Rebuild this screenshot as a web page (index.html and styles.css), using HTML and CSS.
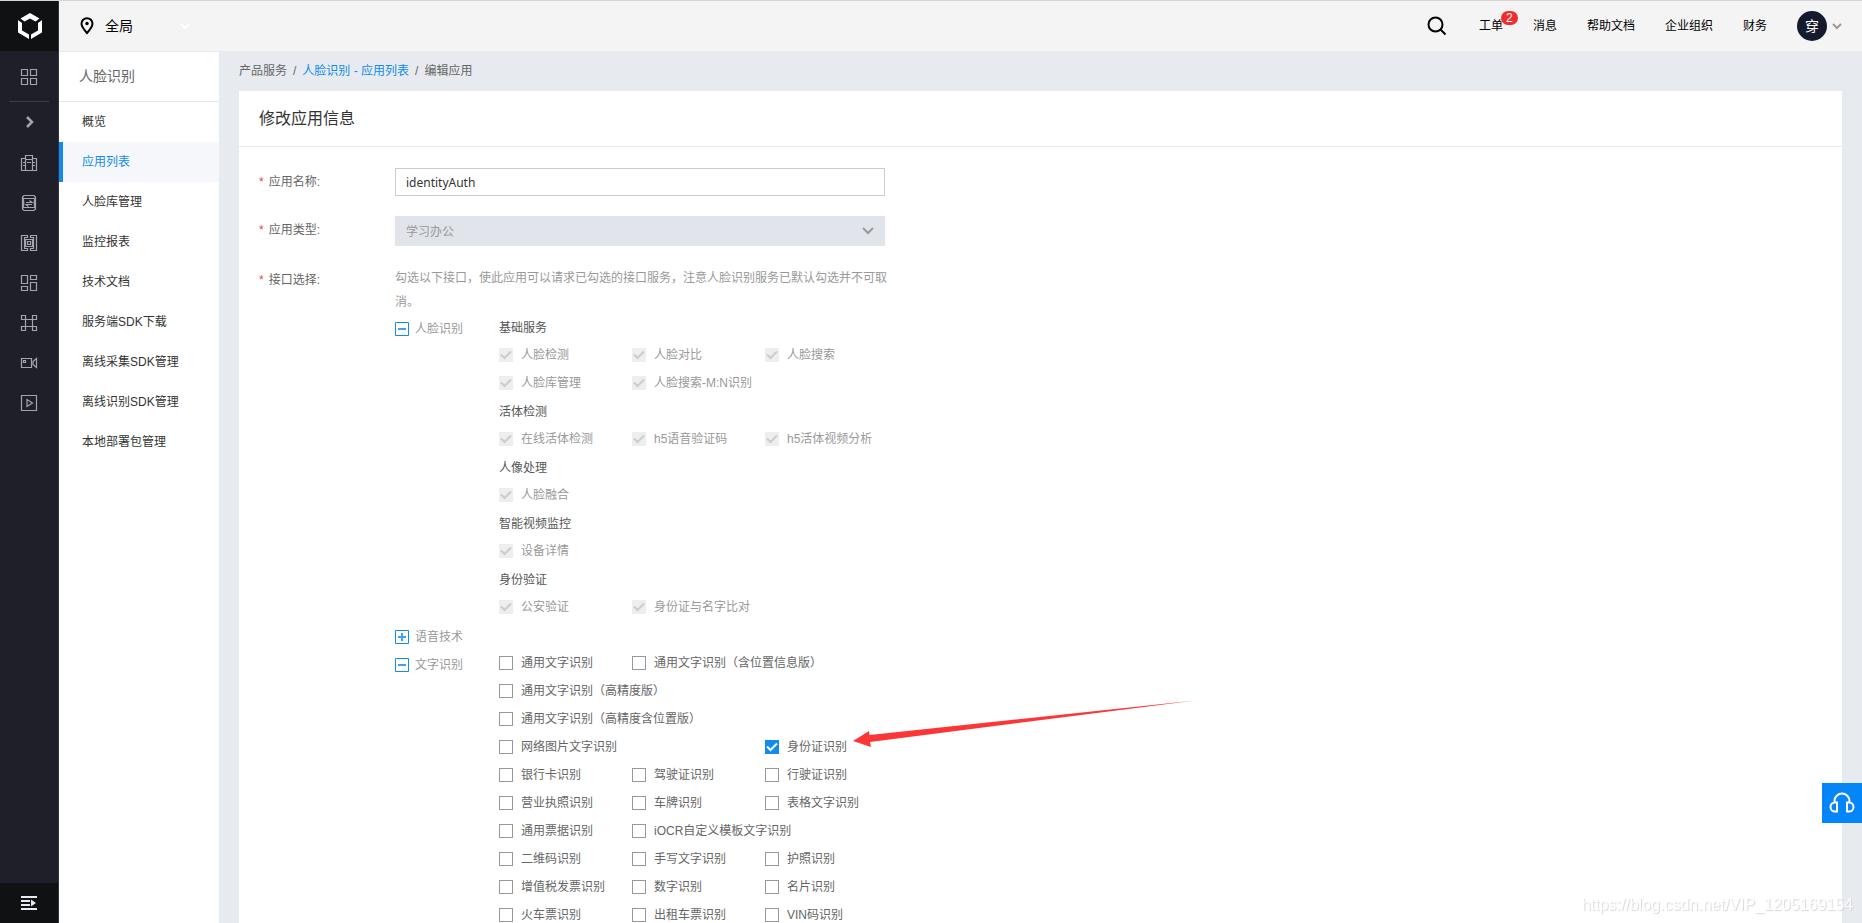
FILE: index.html
```html
<!DOCTYPE html>
<html lang="zh-CN">
<head>
<meta charset="utf-8">
<title>编辑应用</title>
<link rel="stylesheet" href="styles.css">
</head>
<body>
<div class="app">
  <nav class="rail" aria-label="产品导航">
    <a class="rail-logo" href="#" aria-label="首页">
      <svg width="26" height="28" viewBox="0 0 26 28" fill="#fff"><path d="M3.500 6.500 13 1l9.500 5.500-4 3L13 6.500l-5.500 3zM1 8l4 3v7.500l7 4V27L1 20.500zM25 8l-4 3v7.500l-7 4V27l11-6.500z"/></svg>
    </a>
    <a class="rail-item" href="#" aria-label="总览"><svg class="ico" viewBox="0 0 18 18"><path d="M1.500 1.500h6v6h-6zM10.500 1.500h6v6h-6zM1.500 10.500h6v6h-6zM10.500 10.500h6v6h-6z"/></svg></a>
    <span class="rail-line"></span>
    <button class="rail-item" type="button" aria-label="展开"><svg class="ico thick" viewBox="0 0 18 18"><path d="M7 4l5 5-5 5"/></svg></button>
    <a class="rail-item" href="#" aria-label="云服务器"><svg class="ico" viewBox="0 0 18 18"><path d="M5.500 16.500v-15h7v15M5.500 4.500h-4v12h15v-12h-4M5.500 5.500h7M7 8.500h4M3 8.500h2.500M3 11.500h2.500M12.500 8.500H15M12.500 11.500H15"/></svg></a>
    <a class="rail-item" href="#" aria-label="对象存储"><svg class="ico" viewBox="0 0 18 18"><path d="M4 1.500h10l1.500 1.500v12L14 16.500H4L2.500 15V3zM3 4.500h12M3 13.500h12M2.500 3C4 6.500 4 11.500 2.500 15M15.500 3c-1.500 3.500-1.500 8.500 0 12M6 8.500h6L9.500 6.500M12 10.500H6l2.500 2"/></svg></a>
    <a class="rail-item" href="#" aria-label="网络"><svg class="ico" viewBox="0 0 18 18"><path d="M7.500 1.500h-6v15h6v-2h-3v-11h3zM10.500 1.500h6v15h-6v-2h3v-11h-3zM5.500 5.500h7v7h-7zM7.500 7.500h3v3h-3z"/></svg></a>
    <a class="rail-item" href="#" aria-label="数据库"><svg class="ico" viewBox="0 0 18 18"><path d="M1.500 1.500h6v8h-6zM10.500 1.500h6v4h-6zM1.500 12.500h6v4h-6zM10.500 8.500h6v8h-6z"/></svg></a>
    <a class="rail-item" href="#" aria-label="互联"><svg class="ico" viewBox="0 0 18 18"><path d="M1.500 1.500h4v4h-4zM12.500 1.500h4v4h-4zM1.500 12.500h4v4h-4zM12.500 12.500h4v4h-4zM5.500 5.500v7M12.500 5.500v7M5.500 5.500h7M5.500 12.500h7"/></svg></a>
    <a class="rail-item" href="#" aria-label="视频"><svg class="ico" viewBox="0 0 18 18"><path d="M1.500 4.500h10v9h-10zM3.500 6.500h2v2h-2zM16.500 4.500l-3.500 3v3l3.500 3z"/></svg></a>
    <a class="rail-item" href="#" aria-label="播放"><svg class="ico" viewBox="0 0 18 18"><path d="M1.500 1.500h15v15h-15zM7 5.500v7l5.500-3.500z"/></svg></a>
    <button class="rail-fold" type="button" aria-label="收起菜单"><svg width="16" height="14" viewBox="0 0 16 14" fill="#e6ebf2"><path d="M0 0h16v2H0zM0 4h9v2H0zM0 8h9v2H0zM0 12h16v2H0zM10 3.500l5 3.500-5 3.500z"/></svg></button>
  </nav>

  <div class="shell">
    <header class="topbar">
      <button class="region" type="button">
        <svg width="14" height="18" viewBox="0 0 14 18" fill="none" stroke="#000" stroke-width="2"><path d="M7 16C3.500 12 1.500 9.500 1.500 6.700a5.500 5.500 0 0 1 11 0C12.500 9.500 10.500 12 7 16z"/><circle cx="7" cy="6.500" r="1" fill="#000" stroke-width="1.500"/></svg>
        <span>全局</span>
        <svg class="region-arrow" width="10" height="6" viewBox="0 0 10 6" fill="none" stroke="#fff" stroke-width="2"><path d="M1 1l4 4 4-4"/></svg>
      </button>
      <div class="tools">
        <button class="search" type="button" aria-label="搜索"><svg width="20" height="20" viewBox="0 0 20 20" fill="none" stroke="#000" stroke-width="2"><circle cx="8.500" cy="8.500" r="7"/><path d="M13.500 13.500l5 5"/></svg></button>
        <a class="tool" href="#">工单<span class="badge">2</span></a>
        <a class="tool" href="#">消息</a>
        <a class="tool" href="#">帮助文档</a>
        <a class="tool" href="#">企业组织</a>
        <a class="tool" href="#">财务</a>
        <button class="user" type="button"><span class="avatar">穿</span><svg width="10" height="7" viewBox="0 0 10 7" fill="none" stroke="#999" stroke-width="2"><path d="M1 1l4 4 4-4"/></svg></button>
      </div>
    </header>

    <div class="columns">
      <aside class="side">
        <h2 class="side-title">人脸识别</h2>
        <a class="side-link" href="#">概览</a>
        <a class="side-link active" href="#">应用列表</a>
        <a class="side-link" href="#">人脸库管理</a>
        <a class="side-link" href="#">监控报表</a>
        <a class="side-link" href="#">技术文档</a>
        <a class="side-link" href="#">服务端SDK下载</a>
        <a class="side-link" href="#">离线采集SDK管理</a>
        <a class="side-link" href="#">离线识别SDK管理</a>
        <a class="side-link" href="#">本地部署包管理</a>
      </aside>

      <main class="main">
        <nav class="crumbs" aria-label="面包屑">
          <span>产品服务</span><span>/</span><a href="#">人脸识别 - 应用列表</a><span>/</span><span>编辑应用</span>
        </nav>
        <section class="panel">
          <h1 class="panel-title">修改应用信息</h1>
          <form class="form">
            <div class="field">
              <label class="label" for="name"><i>*</i>应用名称:</label>
              <input class="text" id="name" type="text" value="identityAuth">
            </div>
            <div class="field">
              <label class="label" for="kind"><i>*</i>应用类型:</label>
              <select class="select" id="kind" disabled><option>学习办公</option></select>
            </div>
            <div class="field">
              <span class="label"><i>*</i>接口选择:</span>
              <div class="apis">
                <p class="hint">勾选以下接口，使此应用可以请求已勾选的接口服务，注意人脸识别服务已默认勾选并不可取消。</p>

                <div class="group">
                  <button class="toggle" type="button"><svg class="box" viewBox="0 0 14 14"><path d="M.5.5h13v13H.5z"/><path class="sign" d="M3 7h8"/></svg>人脸识别</button>
                  <div class="options">
                    <h3 class="sub">基础服务</h3>
                    <label class="opt"><input type="checkbox" checked disabled>人脸检测</label>
                    <label class="opt"><input type="checkbox" checked disabled>人脸对比</label>
                    <label class="opt"><input type="checkbox" checked disabled>人脸搜索</label>
                    <label class="opt"><input type="checkbox" checked disabled>人脸库管理</label>
                    <label class="opt"><input type="checkbox" checked disabled>人脸搜索-M:N识别</label>
                    <h3 class="sub">活体检测</h3>
                    <label class="opt"><input type="checkbox" checked disabled>在线活体检测</label>
                    <label class="opt"><input type="checkbox" checked disabled>h5语音验证码</label>
                    <label class="opt"><input type="checkbox" checked disabled>h5活体视频分析</label>
                    <h3 class="sub">人像处理</h3>
                    <label class="opt"><input type="checkbox" checked disabled>人脸融合</label>
                    <h3 class="sub">智能视频监控</h3>
                    <label class="opt"><input type="checkbox" checked disabled>设备详情</label>
                    <h3 class="sub">身份验证</h3>
                    <label class="opt"><input type="checkbox" checked disabled>公安验证</label>
                    <label class="opt"><input type="checkbox" checked disabled>身份证与名字比对</label>
                  </div>
                </div>

                <div class="group">
                  <button class="toggle" type="button"><svg class="box" viewBox="0 0 14 14"><path d="M.5.5h13v13H.5z"/><path class="sign" d="M3 7h8M7 3v8"/></svg>语音技术</button>
                </div>

                <div class="group">
                  <button class="toggle" type="button"><svg class="box" viewBox="0 0 14 14"><path d="M.5.5h13v13H.5z"/><path class="sign" d="M3 7h8"/></svg>文字识别</button>
                  <div class="options">
                    <label class="opt"><input type="checkbox">通用文字识别</label>
                    <label class="opt wide"><input type="checkbox">通用文字识别（含位置信息版）</label>
                    <label class="opt wide"><input type="checkbox">通用文字识别（高精度版）</label>
                    <label class="opt wide"><input type="checkbox">通用文字识别（高精度含位置版）</label>
                    <label class="opt wide"><input type="checkbox">网络图片文字识别</label>
                    <label class="opt marked"><input type="checkbox" checked>身份证识别
                      <svg class="pointer" width="342" height="48" viewBox="0 0 342 48" aria-hidden="true"><path d="M0 41l16-10 .5 4L342 .5 17 42l1 5z" fill="#fc3636"/></svg>
                    </label>
                    <label class="opt"><input type="checkbox">银行卡识别</label>
                    <label class="opt"><input type="checkbox">驾驶证识别</label>
                    <label class="opt"><input type="checkbox">行驶证识别</label>
                    <label class="opt"><input type="checkbox">营业执照识别</label>
                    <label class="opt"><input type="checkbox">车牌识别</label>
                    <label class="opt"><input type="checkbox">表格文字识别</label>
                    <label class="opt"><input type="checkbox">通用票据识别</label>
                    <label class="opt wide"><input type="checkbox">iOCR自定义模板文字识别</label>
                    <label class="opt"><input type="checkbox">二维码识别</label>
                    <label class="opt"><input type="checkbox">手写文字识别</label>
                    <label class="opt"><input type="checkbox">护照识别</label>
                    <label class="opt"><input type="checkbox">增值税发票识别</label>
                    <label class="opt"><input type="checkbox">数字识别</label>
                    <label class="opt"><input type="checkbox">名片识别</label>
                    <label class="opt"><input type="checkbox">火车票识别</label>
                    <label class="opt"><input type="checkbox">出租车票识别</label>
                    <label class="opt"><input type="checkbox">VIN码识别</label>
                  </div>
                </div>
              </div>
            </div>
          </form>
        </section>
      </main>
    </div>
  </div>
</div>

<button class="service" type="button" aria-label="在线客服">
  <svg width="26" height="22" viewBox="0 0 26 22" fill="none" stroke="#fff" stroke-width="2"><path d="M5.500 10.500V9a7.500 7.500 0 0 1 15 0v1.500M8 10.500v9H6a4.500 4.500 0 0 1 0-9zM18 10.500v9h2a4.500 4.500 0 0 0 0-9z"/></svg>
</button>
<span class="watermark">https://blog.csdn.net/VIP_1205169154</span>
</body>
</html>
```
FILE: styles.css
```css
* { box-sizing: border-box; }

body {
  margin: 0;
  font: 12px/20px "Liberation Sans", "Noto Sans CJK SC", sans-serif;
  color: #333;
  background: #e7ebf0;
}

h1, h2, h3, p { margin: 0; font-weight: 400; }
a { color: inherit; text-decoration: none; }
button { padding: 0; border: 0; background: none; font: inherit; color: inherit; }
i { font-style: normal; }

.app { display: flex; height: 100vh; border-top: 1px solid #d6d6d6; }

/* dark icon rail */
.rail {
  display: flex;
  flex-direction: column;
  flex: none;
  width: 59px;
  background: #1f1f29;
  border-right: 1px solid #32323d;
}
.rail-logo {
  display: flex;
  align-items: center;
  justify-content: center;
  height: 50px;
  padding-left: 2px;
  background: #0f1112;
}
.rail-item { display: flex; align-items: center; justify-content: center; height: 40px; padding-top: 2px; }
.rail-logo + .rail-item { height: 50px; }
.rail-line { height: 1px; margin: 0 9px; background: #3b3b45; }
button.rail-item { padding-top: 0; }
.rail-fold {
  display: flex;
  align-items: center;
  justify-content: center;
  height: 40px;
  margin-top: auto;
  background: #0f1112;
}
.ico { width: 18px; height: 18px; fill: none; stroke: #a4a4aa; stroke-width: 1.2; }
.ico.thick { stroke-width: 2.5; }

.shell { display: flex; flex-direction: column; flex: 1; min-width: 0; }

/* top bar */
.topbar {
  display: flex;
  align-items: center;
  justify-content: space-between;
  flex: none;
  height: 50px;
  padding: 0 20px 0 21px;
  background: #f4f4f4;
  color: #000;
}
.region { display: flex; align-items: center; gap: 11px; font-size: 14px; }
.region-arrow { margin-left: 36px; }
.tools { display: flex; align-items: center; gap: 30px; }
.tool { position: relative; }
.search, .user { display: flex; align-items: center; }
.search { margin-right: 2px; }
.user { gap: 5px; }
.avatar {
  width: 30px;
  height: 30px;
  border-radius: 50%;
  background: #151b2c;
  color: #fff;
  font-size: 14px;
  line-height: 30px;
}
.badge {
  position: absolute;
  left: 22px;
  top: -5px;
  width: 17px;
  height: 14px;
  border-radius: 7px;
  background: #f02d2d;
  color: #fff;
  line-height: 14px;
  text-align: center;
}

.columns { display: flex; flex: 1; min-height: 0; }

/* product menu */
.side { flex: none; width: 160px; background: #fff; border-top: 1px solid #e8e8e8; }
.side-title {
  height: 50px;
  padding-left: 20px;
  border-bottom: 1px solid #e5e6ea;
  color: #666;
  font-size: 14px;
  line-height: 49px;
}
.side-link { display: block; height: 40px; padding-left: 23px; line-height: 40px; }
.side-link.active {
  padding-left: 19px;
  border-left: 4px solid #108cee;
  background: #f5f7fb;
  color: #108cee;
}

/* content */
.main { flex: 1; min-width: 0; padding: 0 20px; overflow: auto; scrollbar-width: none; }
.crumbs { display: flex; gap: 6px; color: #666; line-height: 40px; }
.crumbs a { color: #108cee; }
.panel { background: #fff; }
.panel-title {
  height: 56px;
  padding-left: 20px;
  border-bottom: 1px solid #e8eaec;
  font-size: 16px;
  line-height: 55px;
}
.form { display: flex; flex-direction: column; gap: 20px; padding: 21px 20px 40px; }
.field { display: flex; align-items: flex-start; }
.label { flex: none; width: 136px; color: #666; line-height: 28px; }
.label i { margin-right: 5px; color: #e8474c; }
.text, .select {
  width: 490px;
  border-radius: 0;
  padding: 0 10px;
  font: 12px "Noto Sans", "Noto Sans CJK SC", sans-serif;
}
.text { height: 28px; border: 1px solid #ccc; background: #fff; color: #333; }
.select {
  height: 30px;
  border: 1px solid #e1e4eb;
  background: #e1e4eb url("data:image/svg+xml,%3Csvg xmlns='http://www.w3.org/2000/svg' width='12' height='8' fill='none' stroke='%23999' stroke-width='2'%3E%3Cpath d='M1 1l5 5 5-5'/%3E%3C/svg%3E") no-repeat right 10px center;
  color: #999;
  opacity: 1;
  appearance: none;
}
.hint { max-width: 500px; height: 47px; color: #999; line-height: 24px; }

.group { display: flex; align-items: flex-start; }
.toggle {
  display: flex;
  align-items: center;
  gap: 6px;
  flex: none;
  width: 104px;
  height: 28px;
  padding-top: 4px;
  color: #999;
}
.box { width: 14px; height: 14px; fill: none; stroke: #108cee; }
.sign { stroke: #3fa2f2; stroke-width: 2; }

.options { display: grid; grid-template-columns: repeat(3, 133px); grid-auto-rows: 28px; }
.sub { grid-column: 1 / -1; color: #555; font-size: 12px; line-height: 30px; }
.opt { display: flex; align-items: center; gap: 8px; color: #666; white-space: nowrap; }
.opt.wide { grid-column: span 2; }
.opt:has(input:disabled) { color: #999; }
.opt input {
  flex: none;
  width: 14px;
  height: 14px;
  margin: 0;
  border: 1px solid #999;
  background: #fff;
  appearance: none;
}
.opt input:checked {
  border: 0;
  background: #108cee url("data:image/svg+xml,%3Csvg xmlns='http://www.w3.org/2000/svg' width='14' height='14' fill='none' stroke='%23fff' stroke-width='2'%3E%3Cpath d='M2 6.500l3.500 3.500L12 3.500'/%3E%3C/svg%3E");
}
.opt input:disabled {
  background: #eee url("data:image/svg+xml,%3Csvg xmlns='http://www.w3.org/2000/svg' width='14' height='14' fill='none' stroke='%23ccc' stroke-width='2'%3E%3Cpath d='M2 6.500l3.500 3.500L12 3.500'/%3E%3C/svg%3E");
}
.marked { position: relative; }
.pointer { position: absolute; left: 88px; top: -33px; pointer-events: none; }

.service {
  position: fixed;
  right: 0;
  bottom: 100px;
  display: flex;
  align-items: center;
  justify-content: center;
  width: 40px;
  height: 40px;
  background: #0486f8;
}
.watermark {
  position: fixed;
  right: 9px;
  bottom: 8px;
  color: #fff;
  font-size: 16px;
  text-shadow: 1px 1px 1px #ccc;
  opacity: 0.8;
  pointer-events: none;
}
```
